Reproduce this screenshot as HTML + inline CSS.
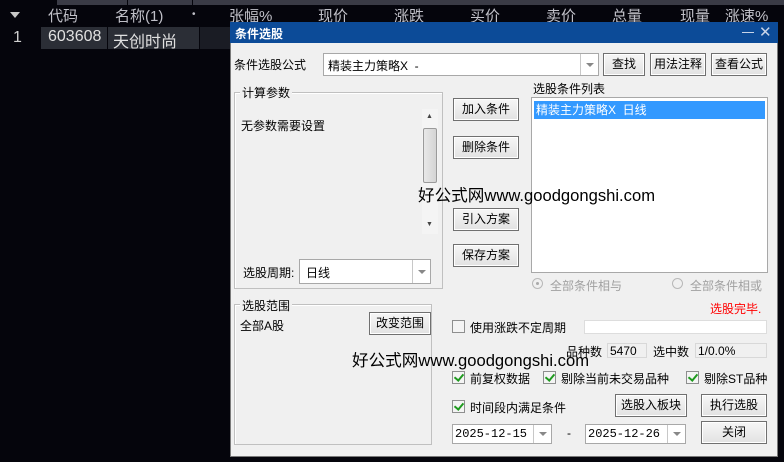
<!DOCTYPE html>
<html><head><meta charset="utf-8"><style>
*{margin:0;padding:0;box-sizing:border-box}
body{width:784px;height:462px;background:#05050c;position:relative;overflow:hidden;font-family:"Liberation Sans","Noto Sans CJK SC",sans-serif;font-size:12px;color:#000}
.a{position:absolute;white-space:nowrap}
.h{color:#c0c0c8;font-size:15px;top:5px}
.btn{position:absolute;background:linear-gradient(#f6f6f6,#e2e2e2);border:1px solid #707070;box-shadow:inset 0 0 0 1px #fff;text-align:center;font-size:12px;line-height:20px}
.box{position:absolute;background:#fff;border:1px solid #a8a8a8}
.dd{position:absolute;right:0;top:0;bottom:0;width:18px;border-left:1px solid #c8c8c8;background:#fff}
.dd:after{content:"";position:absolute;left:5px;top:50%;margin-top:-2px;border-left:4px solid transparent;border-right:4px solid transparent;border-top:4px solid #888}
.grp{position:absolute;border:1px solid #c0c0c0;box-shadow:inset 1px 1px 0 #fff}
.gl{position:absolute;background:#f0f0f0;padding:0 2px;font-size:12px}
.cb{position:absolute;width:13px;height:13px;border:1px solid #8e8f8f;background:#f4f4f4}
.cb.c:after{content:"";position:absolute;left:3px;top:0px;width:4px;height:7px;border:solid #1f9a1f;border-width:0 2px 2px 0;transform:rotate(40deg)}
.wm{position:absolute;font-size:16.6px;color:#000;white-space:nowrap}
</style></head><body>
<div class="a" style="left:57px;top:0;width:727px;height:5px;background:#3a3b46"></div>
<div class="a" style="left:127px;top:0;width:1px;height:5px;background:#05050c"></div>
<div class="a" style="left:192px;top:0;width:1px;height:5px;background:#05050c"></div>
<div class="a" style="left:0;top:5px;width:784px;height:22px;background:#05050c"></div>
<div class="a" style="left:10px;top:12px;border-left:5px solid transparent;border-right:5px solid transparent;border-top:6px solid #c8c8c8"></div>
<div class="a h" style="left:48px">代码</div>
<div class="a h" style="left:115px">名称(1)</div>
<div class="a h" style="left:192px;font-size:10px;top:9px">•</div>
<div class="a h" style="left:229px">张幅%</div>
<div class="a h" style="left:318px">现价</div>
<div class="a h" style="left:394px">涨跌</div>
<div class="a h" style="left:470px">买价</div>
<div class="a h" style="left:546px">卖价</div>
<div class="a h" style="left:612px">总量</div>
<div class="a h" style="left:680px">现量</div>
<div class="a h" style="left:725px">涨速%</div>
<div class="a" style="left:41px;top:27px;width:66px;height:22px;background:#2b2e36"></div>
<div class="a" style="left:108px;top:27px;width:91px;height:22px;background:#2b2e36"></div>
<div class="a" style="left:200px;top:27px;width:30px;height:22px;background:#1a1c24"></div>
<div class="a" style="left:13px;top:29px;color:#d0d0d0;font-size:16px">1</div>
<div class="a" style="left:48px;top:28px;color:#e0e0e0;font-size:16px">603608</div>
<div class="a" style="left:113px;top:28px;color:#e0e0e0;font-size:16px">天创时尚</div>

<div class="a" style="left:230px;top:22px;width:548px;height:435px;background:#f0f0f0;border:1px solid #7a7a7a"></div>
<div class="a" style="left:230px;top:22px;width:548px;height:21px;background:#0c4b98"></div>
<div class="a" style="left:235px;top:25px;color:#fff;font-weight:bold;font-size:12px">条件选股</div>
<div class="a" style="left:742px;top:32px;width:12px;height:1px;background:#c8d4e8"></div>
<div class="a" style="left:759px;top:23px;color:#c8d4e8;font-size:15px">✕</div>

<div class="a" style="left:234px;top:56px">条件选股公式</div>
<div class="box" style="left:323px;top:53px;width:276px;height:23px"><span class="a" style="left:4px;top:3px">精装主力策略X&nbsp; -</span><div class="dd"></div></div>
<div class="btn" style="left:603px;top:53px;width:42px;height:23px">查找</div>
<div class="btn" style="left:650px;top:53px;width:56px;height:23px">用法注释</div>
<div class="btn" style="left:711px;top:53px;width:56px;height:23px">查看公式</div>

<div class="grp" style="left:234px;top:92px;width:209px;height:197px"></div>
<div class="gl" style="left:240px;top:84px">计算参数</div>
<div class="a" style="left:241px;top:117px">无参数需要设置</div>
<div class="a" style="left:422px;top:109px;width:16px;height:125px;background:#f4f4f4"></div>
<div class="a" style="left:423px;top:128px;width:14px;height:55px;background:linear-gradient(90deg,#e8e8e8,#d4d4d4);border:1px solid #9a9a9a;border-radius:2px"></div>
<div class="a" style="left:426px;top:113px;font-size:7px;color:#444">▲</div>
<div class="a" style="left:426px;top:221px;font-size:7px;color:#444">▼</div>
<div class="a" style="left:243px;top:264px">选股周期:</div>
<div class="box" style="left:299px;top:259px;width:132px;height:25px"><span class="a" style="left:6px;top:4px">日线</span><div class="dd"></div></div>

<div class="btn" style="left:453px;top:98px;width:66px;height:23px">加入条件</div>
<div class="btn" style="left:453px;top:136px;width:66px;height:23px">删除条件</div>
<div class="btn" style="left:453px;top:208px;width:66px;height:23px">引入方案</div>
<div class="btn" style="left:453px;top:244px;width:66px;height:23px">保存方案</div>

<div class="a" style="left:533px;top:80px">选股条件列表</div>
<div class="box" style="left:531px;top:97px;width:237px;height:176px"><div class="a" style="left:2px;top:3px;width:231px;height:18px;background:#3399ff;color:#fff;padding-left:2px;line-height:18px">精装主力策略X&nbsp; 日线</div></div>
<div class="a" style="left:532px;top:278px;width:11px;height:11px;border:1px solid #b8b8b8;border-radius:50%;background:#f0f0f0"></div>
<div class="a" style="left:536px;top:282px;width:3px;height:3px;border-radius:50%;background:#aaa"></div>
<div class="a" style="left:550px;top:277px;color:#a0a0a0">全部条件相与</div>
<div class="a" style="left:672px;top:278px;width:11px;height:11px;border:1px solid #b8b8b8;border-radius:50%;background:#f0f0f0"></div>
<div class="a" style="left:690px;top:277px;color:#a0a0a0">全部条件相或</div>
<div class="a" style="left:710px;top:300px;color:#ff0000">选股完毕.</div>

<div class="grp" style="left:234px;top:304px;width:198px;height:141px"></div>
<div class="gl" style="left:240px;top:297px">选股范围</div>
<div class="a" style="left:240px;top:317px">全部A股</div>
<div class="btn" style="left:369px;top:312px;width:62px;height:23px">改变范围</div>

<div class="cb" style="left:452px;top:320px"></div>
<div class="a" style="left:470px;top:319px">使用涨跌不定周期</div>
<div class="box" style="left:584px;top:320px;width:183px;height:14px;border-color:#ddd"></div>
<div class="a" style="left:566px;top:343px">品种数</div>
<div class="a" style="left:607px;top:343px;width:40px;height:15px;border:1px solid #d8d8d8;padding-left:2px">5470</div>
<div class="a" style="left:653px;top:343px">选中数</div>
<div class="a" style="left:695px;top:343px;width:72px;height:15px;border:1px solid #d8d8d8;padding-left:2px">1/0.0%</div>

<div class="cb c" style="left:452px;top:371px"></div><div class="a" style="left:470px;top:370px">前复权数据</div>
<div class="cb c" style="left:543px;top:371px"></div><div class="a" style="left:561px;top:370px">剔除当前未交易品种</div>
<div class="cb c" style="left:686px;top:371px"></div><div class="a" style="left:704px;top:370px">剔除ST品种</div>
<div class="cb c" style="left:452px;top:400px"></div><div class="a" style="left:470px;top:399px">时间段内满足条件</div>
<div class="btn" style="left:615px;top:394px;width:72px;height:23px">选股入板块</div>
<div class="btn" style="left:701px;top:394px;width:66px;height:23px">执行选股</div>
<div class="btn" style="left:701px;top:421px;width:66px;height:23px">关闭</div>
<div class="box" style="left:452px;top:424px;width:100px;height:20px"><span class="a" style="left:2px;top:2px;font-family:'Liberation Mono',monospace;font-size:12px">2025-12-15</span><div class="dd"></div></div>
<div class="a" style="left:567px;top:426px">-</div>
<div class="box" style="left:585px;top:424px;width:101px;height:20px"><span class="a" style="left:2px;top:2px;font-family:'Liberation Mono',monospace;font-size:12px">2025-12-26</span><div class="dd"></div></div>

<div class="wm" style="left:418px;top:182px">好公式网www.goodgongshi.com</div>
<div class="wm" style="left:352px;top:347px">好公式网www.goodgongshi.com</div>
</body></html>
